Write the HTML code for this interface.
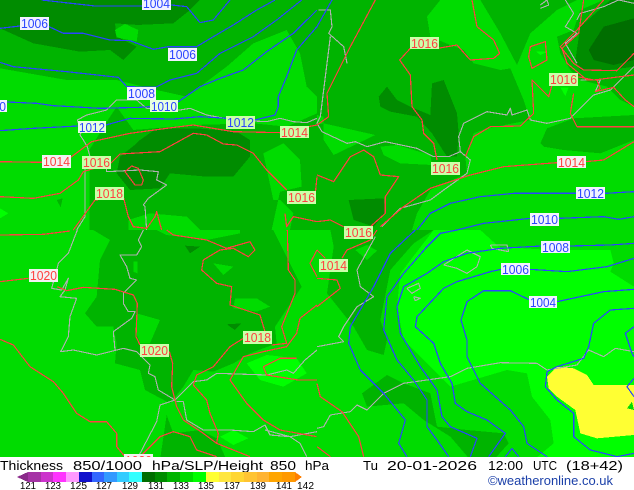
<!DOCTYPE html>
<html><head><meta charset="utf-8">
<style>
html,body{margin:0;padding:0;background:#fff;width:634px;height:490px;overflow:hidden}
svg{display:block}
.f polygon{shape-rendering:crispEdges}
.b polyline{fill:none;stroke:#2a44ff;stroke-width:3.6;stroke-linejoin:round;shape-rendering:crispEdges}
.r polyline{fill:none;stroke:#ff4040;stroke-width:3.6;stroke-linejoin:round;shape-rendering:crispEdges}
.g polyline{fill:none;stroke:#b0b0b0;stroke-width:3.4;stroke-linejoin:round;shape-rendering:crispEdges}
.l text{font:13px "Liberation Sans",sans-serif;text-anchor:start}
.t text{font:13px "Liberation Sans",sans-serif;fill:#000}
.n text{font:10px "Liberation Sans",sans-serif;fill:#000}
</style></head><body>
<svg width="634" height="490" viewBox="0 0 634 490" xmlns="http://www.w3.org/2000/svg">
<rect x="0" y="0" width="634" height="457" fill="#00dc00"/>
<!-- zoom3 frame fills -->
<g class="f" transform="scale(.33333)">
<polygon fill="#00b400" points="0,0 951,0 951,290 920,260 900,160 860,90 760,130 680,200 560,290 470,270 350,240 200,240 0,205"/>
<polygon fill="#008c00" points="0,0 600,0 570,30 520,70 410,75 350,90 350,110 410,140 370,180 330,150 240,155 100,130 0,85"/>
<polygon fill="#00b400" points="345,70 415,75 410,140 350,110"/>
<polygon fill="#00dc00" points="345,90 375,72 415,90 410,125 350,112"/>
<polygon fill="#00b400" points="268,690 268,450 330,350 350,320 400,390 580,375 760,370 860,380 951,340 951,690"/>
<polygon fill="#00dc00" points="790,460 850,430 900,480 905,560 840,575 815,690 870,690 880,640 840,600 820,600"/>
<polygon fill="#00dc00" points="385,660 450,640 560,650 600,690 385,690"/>
<polygon fill="#008c00" points="420,420 470,385 590,385 710,395 750,420 750,470 700,530 620,530 510,520 480,565 390,570 350,520 360,470 410,430"/>
<polygon fill="#00b400" points="170,600 188,595 182,622"/>
<polygon fill="#00ff00" points="0,625 25,640 0,655"/>
</g>
<!-- zoom4 frame fills -->
<g class="f" transform="translate(317,0) scale(.33333)">
<polygon fill="#00b400" points="0,0 370,0 330,50 340,110 400,135 440,150 470,190 550,210 580,205 620,300 640,360 510,385 470,400 445,470 450,520 340,570 300,640 285,690 0,690"/>
<polygon fill="#00dc00" points="0,345 20,350 20,370 0,375"/>
<polygon fill="#00dc00" points="20,370 175,405 50,465 20,420"/>
<polygon fill="#00dc00" points="190,440 240,435 340,465 345,495 250,490 200,465"/>
<polygon fill="#008c00" points="185,290 210,260 240,300 280,320 340,345 345,250 380,240 400,290 420,340 425,400 420,470 390,470 345,400 300,350 220,335 190,320"/>
<polygon fill="#008c00" points="95,600 200,595 205,640 170,680 110,660"/>
<polygon fill="#00b400" points="490,0 550,100 600,195 640,100 720,30 780,0"/>
<polygon fill="#00b400" points="720,110 770,90 790,30 860,0 951,0 951,320 910,300 870,260 790,240 760,210 730,160"/>
<polygon fill="#008c00" points="775,180 790,80 880,0 951,0 951,200 860,212 790,210"/>
<polygon fill="#006e00" points="815,150 860,80 951,55 951,180 890,195 830,180"/>
<polygon fill="#00b400" points="670,430 690,385 770,355 951,345 951,420 850,460 740,450 680,440"/>
<polygon fill="#00ff00" points="730,262 755,262 745,288"/>
<polygon fill="#00ff00" points="658,155 690,155 670,165"/>
</g>
<!-- zoom5 frame fills -->
<g class="f" transform="translate(0,230) scale(.33333)">
<polygon fill="#00b400" points="280,0 330,30 300,90 290,200 255,250 290,290 340,290 350,340 345,400 420,420 435,480 510,520 550,470 580,420 640,425 700,400 750,370 830,340 825,290 905,170 820,0"/>
<polygon fill="#00dc00" points="410,250 480,270 450,340 420,340 405,300"/>
<polygon fill="#00dc00" points="640,100 700,110 670,135"/>
<polygon fill="#00dc00" points="705,205 770,205 810,230 770,245 700,235"/>
<polygon fill="#00dc00" points="400,95 412,95 412,130 400,125"/>
<polygon fill="#00dc00" points="470,0 500,15 620,30 720,10 720,0"/>
<polygon fill="#008c00" points="555,47 600,50 570,70"/>
<polygon fill="#008c00" points="680,283 725,280 705,300"/>
<polygon fill="#00b400" points="500,555 520,610 600,600 650,625 680,690 480,690"/>
<polygon fill="#00ff00" points="740,400 800,375 890,385 920,430 850,470 780,450"/>
<polygon fill="#00ff00" points="660,620 700,600 745,625 700,645"/>
</g>
<!-- zoom6 frame fills -->
<g class="f" transform="translate(317,230) scale(.33333)">
<polygon fill="#00b400" points="40,0 50,50 30,190 110,290 150,360 200,375 210,330 190,270 220,120 290,40 350,0"/>
<polygon fill="#00dc00" points="115,60 150,45 180,62 150,90"/>
<polygon fill="#00b400" points="135,490 210,435 260,460 340,490 360,590 450,600 560,610 575,640 530,690 460,690 400,620 320,570 260,520 150,530"/>
<polygon fill="#00ff00" points="350,0 250,130 240,230 260,330 400,470 570,420 630,430 645,500 700,570 710,640 650,690 951,690 951,170 880,125 890,100 880,60 700,60 545,50 490,0"/>
<polygon fill="#ffff33" points="690,440 720,410 770,415 810,435 830,465 951,465 951,615 840,625 790,610 775,540 720,500 695,475"/>
<polygon fill="#00dc00" points="930,535 945,515 951,540"/>
</g>

<!-- coast -->
<g class="g" transform="scale(.33333)">
<polyline points="440,690 435,620 430,615 445,595 500,555 470,540 475,515 420,510 320,515 320,490 250,490 270,470 262,440 250,420 240,405 245,395 232,360 260,345 320,330 350,300 410,300 440,325 540,330 570,325 620,345 700,360 800,365 840,355 880,365 920,368 951,355"/>
<polyline points="255,500 255,650 230,690"/>
</g>
<g class="g" transform="translate(317,0) scale(.33333)">
<polyline points="5,30 40,30 45,80 35,100 80,140 90,190"/>
<polyline points="40,110 10,350 0,370 15,395 90,430 115,425 150,440 205,425 300,445 350,470 395,470 430,455 425,410 440,370 510,335 570,345 580,325 585,345 630,330 640,360 690,370 760,355 830,285 880,270 951,200"/>
<polyline points="430,455 460,480 450,520 380,570 340,600 250,625 195,680"/>
<polyline points="745,0 770,40 745,80 780,100 745,130 780,190"/>
<polyline points="780,60 790,40 860,20 905,0"/>
<polyline points="905,0 951,10"/>
<polyline points="670,15 690,0 695,15 670,25"/>
<polyline points="790,240 820,240 850,240 835,275"/>
</g>
<g class="g" transform="translate(0,230) scale(.33333)">
<polyline points="232,0 205,70 175,100 170,120 155,175 185,180 205,145 195,180 180,200 230,205 210,260 205,320 182,365 220,360 290,375 370,355 410,365 450,405 445,430 465,440 475,480 525,510 580,455 620,450 650,430 800,435 860,420 880,430 915,390 951,360"/>
<polyline points="430,0 415,30 425,50 410,75 360,75 380,110 390,145 410,150 370,190 370,220 385,245 405,245 395,265 340,305 345,360"/>
<polyline points="525,510 480,525 470,575 415,680"/>
<polyline points="530,515 550,515 560,570 610,600 690,600 760,605 795,585 810,615 870,620 900,640 920,680"/>
<polyline points="795,600 870,620 951,605"/>
</g>
<g class="g" transform="translate(317,230) scale(.33333)">
<polyline points="175,20 120,120 130,170 170,200 120,230 80,290 65,320 80,335 0,350"/>
<polyline points="0,595 20,590 40,555 100,545 120,525 150,540 200,490 260,460 400,440 450,415 550,398 660,400 690,420 780,405 815,360 860,380 895,355 951,365"/>
<polyline points="270,175 305,160 310,175 285,190 270,175"/>
<polyline points="290,200 310,205 295,212 290,200"/>
<polyline points="380,105 450,60 490,80 480,110 450,130 420,115 380,105"/>
<polyline points="520,45 570,45 575,65 525,55 520,45"/>
</g>

<!-- blue -->
<g class="b" transform="scale(.33333)">
<polyline points="125,0 285,18 430,18 515,15 560,20 600,68 640,60 690,0"/>
<polyline points="0,85 60,78 147,80 190,100 250,100 330,120 390,122 460,148 505,140 590,140 640,110 700,75 770,30 825,0"/>
<polyline points="0,187 40,200 200,215 355,232 380,260 467,262 510,240 590,220 660,160 760,110 830,60 905,0"/>
<polyline points="0,305 110,310 160,317 300,325 420,322 450,320 535,305 600,260 660,235 730,210 800,155 880,100 951,30"/>
<polyline points="0,392 100,385 235,378 318,375 390,355 520,357 600,350 680,355 765,360 825,345 835,320 835,290 860,230 890,150 951,80"/>
</g>
<g class="b" transform="translate(317,0) scale(.33333)">
<polyline points="45,0 0,80"/>
<polyline points="300,690 340,640 400,610 490,590 590,580 770,580 865,580 951,575"/>
<polyline points="420,690 500,670 640,655 725,655 860,650 905,658 951,650"/>
</g>
<g class="b" transform="translate(317,230) scale(.33333)">
<polyline points="420,0 370,10 330,50 260,130 210,200 200,300 240,390 290,450 330,510 330,590 360,630 395,680"/>
<polyline points="295,0 220,70 170,170 100,290 95,340 130,420 200,490 265,570 245,640 270,680"/>
<polyline points="951,40 880,45 755,48 672,48 550,55 450,70 380,95 330,130 260,170 240,230 250,310 310,410 360,480 375,560 400,590 480,625 460,680"/>
<polyline points="951,85 870,110 750,125 638,118 552,118 520,125 420,155 380,175 300,260 295,290 350,340 370,400 405,460 415,520 450,545 510,570 565,610 515,680"/>
<polyline points="951,178 860,185 720,215 638,210 580,182 500,182 450,215 432,270 450,330 450,380 490,460 580,540 620,590 630,640 690,680"/>
<polyline points="951,235 880,240 830,280 815,350 800,385 720,410 690,425 685,470 720,510 770,550 770,620 820,660 900,680 951,670"/>
<polyline points="951,290 925,310 945,370 951,380"/>
<polyline points="951,445 930,470 951,500"/>
<polyline points="565,680 585,655 605,680"/>
</g>

<!-- red -->
<g class="r" transform="scale(.33333)">
<polyline points="0,485 125,487 215,470 275,425 390,400 500,385 580,375 700,395 840,398 925,380 951,375"/>
<polyline points="0,590 100,595 180,580 235,540 250,515 332,490 360,462 480,455 580,400 620,405 670,432 710,435 760,460 800,510 860,570"/>
<polyline points="951,530 945,590"/>
<polyline points="375,515 395,498 415,505 430,540 425,555 405,555 375,515"/>
<polyline points="220,690 285,600 370,590 385,650 400,680 440,685 465,650 470,635 485,690"/>
<polyline points="855,640 860,680 880,650 951,665"/>
</g>
<g class="r" transform="translate(317,0) scale(.33333)">
<polyline points="175,0 100,140 30,280 35,350 0,375"/>
<polyline points="0,525 50,545 100,470 140,450 170,470 190,525 245,530 205,590 205,640 160,680"/>
<polyline points="280,145 248,180 280,225 285,320 315,360 320,400 350,430 360,480"/>
<polyline points="362,145 420,135 460,180 530,175 548,160 530,120 480,80 465,0"/>
<polyline points="445,470 470,410 520,380 610,378 650,340 645,240 695,290 705,255"/>
<polyline points="770,280 760,340 780,380 951,380"/>
<polyline points="190,680 260,620 340,565 460,525 560,500 720,488 805,485 860,480 951,425"/>
<polyline points="800,0 785,100 735,145 750,190 810,240 840,240 850,265 835,275 890,262 925,300 951,320"/>
<polyline points="860,0 780,90 730,140 770,190 800,210 900,212 951,160"/>
<polyline points="780,230 830,240 951,225"/>
<polyline points="640,140 685,125 690,180 645,205 635,170 640,140"/>
<polyline points="0,665 40,660 80,680"/>
</g>
<g class="r" transform="translate(0,230) scale(.33333)">
<polyline points="0,15 130,13 210,3"/>
<polyline points="0,155 85,145"/>
<polyline points="172,170 200,182 250,172 345,178 400,195 412,220 408,320 420,345"/>
<polyline points="508,365 518,400 515,470 530,530 550,570 610,610 650,640 750,680"/>
<polyline points="500,0 520,15 620,30 680,55 750,35 765,60 745,80 700,55 660,60 610,90 605,120 650,160 695,170 690,225 780,255 795,305"/>
<polyline points="730,325 690,350 640,410 590,435 580,465 620,510 630,550 655,610 650,640"/>
<polyline points="815,345 860,340 845,290 885,190 885,150 865,120 862,0"/>
<polyline points="951,225 900,265 890,310 860,350 790,365 730,380 690,450 740,520 790,570 840,600 950,620"/>
<polyline points="951,60 930,100 951,140"/>
<polyline points="951,450 895,450 800,435 790,410 840,385 890,385"/>
<polyline points="0,328 40,345 90,410 160,455 190,490 230,550 270,575 320,575 350,610 350,650 375,680"/>
<polyline points="420,680 480,620 520,605 570,620 590,660 650,680"/>
</g>
<g class="r" transform="translate(317,230) scale(.33333)">
<polyline points="0,60 25,85"/>
<polyline points="0,145 60,150 70,175 0,230"/>
<polyline points="180,0 160,30 90,60 75,85"/>
<polyline points="0,460 10,500 75,545 125,620 140,680"/>
<polyline points="0,650 40,680"/>
</g>

<!-- labels -->
<g class="l">
<rect x="142" y="-9" width="29" height="19" fill="#f2f2ff"/><text x="143" y="8" fill="#2a44ff" textLength="27" lengthAdjust="spacingAndGlyphs">1004</text>
<rect x="20" y="17" width="29" height="13" fill="#f2f2ff"/><text x="21" y="28" fill="#2a44ff" textLength="27" lengthAdjust="spacingAndGlyphs">1006</text>
<rect x="168" y="48" width="29" height="13" fill="#f2f2ff"/><text x="169" y="59" fill="#2a44ff" textLength="27" lengthAdjust="spacingAndGlyphs">1006</text>
<rect x="127" y="87" width="29" height="13" fill="#f2f2ff"/><text x="128" y="98" fill="#2a44ff" textLength="27" lengthAdjust="spacingAndGlyphs">1008</text>
<rect x="150" y="100" width="28" height="12" fill="#e8ffe0"/><text x="151" y="111" fill="#2a44ff" textLength="26" lengthAdjust="spacingAndGlyphs">1010</text>
<rect x="-22" y="100" width="29" height="12" fill="#f2f2ff"/><text x="-21" y="111" fill="#2a44ff" textLength="27" lengthAdjust="spacingAndGlyphs">1010</text>
<rect x="78" y="121" width="28" height="12" fill="#e8ffe0"/><text x="79" y="132" fill="#2a44ff" textLength="26" lengthAdjust="spacingAndGlyphs">1012</text>
<rect x="226" y="116" width="29" height="13" fill="#ccffaa"/><text x="227" y="127" fill="#2a44ff" textLength="27" lengthAdjust="spacingAndGlyphs">1012</text>
<rect x="280" y="126" width="29" height="12" fill="#ccffaa"/><text x="281" y="137" fill="#ff4040" textLength="27" lengthAdjust="spacingAndGlyphs">1014</text>
<rect x="42" y="155" width="29" height="13" fill="#f2f2f2"/><text x="43" y="166" fill="#ff4040" textLength="27" lengthAdjust="spacingAndGlyphs">1014</text>
<rect x="82" y="156" width="29" height="13" fill="#ccffaa"/><text x="83" y="167" fill="#ff4040" textLength="27" lengthAdjust="spacingAndGlyphs">1016</text>
<rect x="95" y="187" width="29" height="13" fill="#ccffaa"/><text x="96" y="198" fill="#ff4040" textLength="27" lengthAdjust="spacingAndGlyphs">1018</text>
<rect x="410" y="37" width="29" height="12" fill="#ccffaa"/><text x="411" y="48" fill="#ff4040" textLength="27" lengthAdjust="spacingAndGlyphs">1016</text>
<rect x="549" y="73" width="29" height="13" fill="#ccffaa"/><text x="550" y="84" fill="#ff4040" textLength="27" lengthAdjust="spacingAndGlyphs">1016</text>
<rect x="431" y="162" width="29" height="13" fill="#ccffaa"/><text x="432" y="173" fill="#ff4040" textLength="27" lengthAdjust="spacingAndGlyphs">1016</text>
<rect x="557" y="156" width="29" height="12" fill="#f2f2f2"/><text x="558" y="167" fill="#ff4040" textLength="27" lengthAdjust="spacingAndGlyphs">1014</text>
<rect x="576" y="187" width="29" height="12" fill="#f2f2ff"/><text x="577" y="198" fill="#2a44ff" textLength="27" lengthAdjust="spacingAndGlyphs">1012</text>
<rect x="530" y="213" width="29" height="13" fill="#f2f2ff"/><text x="531" y="224" fill="#2a44ff" textLength="27" lengthAdjust="spacingAndGlyphs">1010</text>
<rect x="287" y="191" width="29" height="13" fill="#ccffaa"/><text x="288" y="202" fill="#ff4040" textLength="27" lengthAdjust="spacingAndGlyphs">1016</text>
<rect x="344" y="226" width="29" height="13" fill="#ccffaa"/><text x="345" y="237" fill="#ff4040" textLength="27" lengthAdjust="spacingAndGlyphs">1016</text>
<rect x="319" y="259" width="29" height="13" fill="#ccffaa"/><text x="320" y="270" fill="#ff4040" textLength="27" lengthAdjust="spacingAndGlyphs">1014</text>
<rect x="541" y="241" width="29" height="12" fill="#f2f2ff"/><text x="542" y="252" fill="#2a44ff" textLength="27" lengthAdjust="spacingAndGlyphs">1008</text>
<rect x="501" y="263" width="29" height="12" fill="#f2f2ff"/><text x="502" y="274" fill="#2a44ff" textLength="27" lengthAdjust="spacingAndGlyphs">1006</text>
<rect x="529" y="296" width="28" height="12" fill="#f2f2ff"/><text x="530" y="307" fill="#2a44ff" textLength="26" lengthAdjust="spacingAndGlyphs">1004</text>
<rect x="29" y="269" width="29" height="13" fill="#f2f2f2"/><text x="30" y="280" fill="#ff4040" textLength="27" lengthAdjust="spacingAndGlyphs">1020</text>
<rect x="140" y="344" width="29" height="13" fill="#ccffaa"/><text x="141" y="355" fill="#ff4040" textLength="27" lengthAdjust="spacingAndGlyphs">1020</text>
<rect x="243" y="331" width="29" height="13" fill="#ccffaa"/><text x="244" y="342" fill="#ff4040" textLength="27" lengthAdjust="spacingAndGlyphs">1018</text>
<rect x="124" y="454" width="29" height="3" fill="#f2f2f2"/><text x="125" y="465" fill="#ff4040" textLength="27" lengthAdjust="spacingAndGlyphs">1020</text>
</g>

<!-- title -->
<rect x="0" y="457" width="634" height="33" fill="#fff"/>
<g class="t">
<text x="0" y="470" textLength="63" lengthAdjust="spacingAndGlyphs">Thickness</text>
<text x="73" y="470" textLength="69" lengthAdjust="spacingAndGlyphs">850/1000</text>
<text x="152" y="470" textLength="111" lengthAdjust="spacingAndGlyphs">hPa/SLP/Height</text>
<text x="270" y="470" textLength="26" lengthAdjust="spacingAndGlyphs">850</text>
<text x="305" y="470" textLength="24" lengthAdjust="spacingAndGlyphs">hPa</text>
<text x="363" y="470" textLength="15" lengthAdjust="spacingAndGlyphs">Tu</text>
<text x="387" y="470" textLength="90" lengthAdjust="spacingAndGlyphs">20-01-2026</text>
<text x="488" y="470" textLength="35" lengthAdjust="spacingAndGlyphs">12:00</text>
<text x="533" y="470" textLength="24" lengthAdjust="spacingAndGlyphs">UTC</text>
<text x="566" y="470" textLength="57" lengthAdjust="spacingAndGlyphs">(18+42)</text>
</g>
<text x="488" y="485" textLength="125" lengthAdjust="spacingAndGlyphs" style="font:13px 'Liberation Sans',sans-serif" fill="#1a3fa8">©weatheronline.co.uk</text>

<!-- colorbar -->
<g shape-rendering="crispEdges">
<polygon points="17,477 28,472 28,482" fill="#8a2a8a"/>
<rect x="28" y="472" width="13" height="10" fill="#a533a5"/>
<rect x="41" y="472" width="12" height="10" fill="#cc33cc"/>
<rect x="53" y="472" width="13" height="10" fill="#ff33ff"/>
<rect x="66" y="472" width="13" height="10" fill="#ff99ff"/>
<rect x="79" y="472" width="13" height="10" fill="#1111cc"/>
<rect x="92" y="472" width="12" height="10" fill="#3366ff"/>
<rect x="104" y="472" width="13" height="10" fill="#3399ff"/>
<rect x="117" y="472" width="12" height="10" fill="#33ccff"/>
<rect x="129" y="472" width="13" height="10" fill="#33ffff"/>
<rect x="142" y="472" width="13" height="10" fill="#006e00"/>
<rect x="155" y="472" width="12" height="10" fill="#008c00"/>
<rect x="167" y="472" width="13" height="10" fill="#00b400"/>
<rect x="180" y="472" width="13" height="10" fill="#00dc00"/>
<rect x="193" y="472" width="13" height="10" fill="#00ff00"/>
<rect x="206" y="472" width="13" height="10" fill="#ffff33"/>
<rect x="219" y="472" width="12" height="10" fill="#ffe640"/>
<rect x="231" y="472" width="13" height="10" fill="#ffd633"/>
<rect x="244" y="472" width="13" height="10" fill="#ffc433"/>
<rect x="257" y="472" width="12" height="10" fill="#ffb433"/>
<rect x="269" y="472" width="13" height="10" fill="#ffa500"/>
<rect x="282" y="472" width="13" height="10" fill="#ff9900"/>
<polygon points="295,472 302,477 295,482" fill="#ff7f00"/>
</g>
<g class="n">
<text x="20" y="489" textLength="16" lengthAdjust="spacingAndGlyphs">121</text>
<text x="45" y="489" textLength="16" lengthAdjust="spacingAndGlyphs">123</text>
<text x="70" y="489" textLength="17" lengthAdjust="spacingAndGlyphs">125</text>
<text x="96" y="489" textLength="16" lengthAdjust="spacingAndGlyphs">127</text>
<text x="122" y="489" textLength="16" lengthAdjust="spacingAndGlyphs">129</text>
<text x="148" y="489" textLength="16" lengthAdjust="spacingAndGlyphs">131</text>
<text x="173" y="489" textLength="16" lengthAdjust="spacingAndGlyphs">133</text>
<text x="198" y="489" textLength="16" lengthAdjust="spacingAndGlyphs">135</text>
<text x="224" y="489" textLength="16" lengthAdjust="spacingAndGlyphs">137</text>
<text x="250" y="489" textLength="16" lengthAdjust="spacingAndGlyphs">139</text>
<text x="276" y="489" textLength="16" lengthAdjust="spacingAndGlyphs">141</text>
<text x="297" y="489" textLength="17" lengthAdjust="spacingAndGlyphs">142</text>
</g>
</svg>
</body></html>
